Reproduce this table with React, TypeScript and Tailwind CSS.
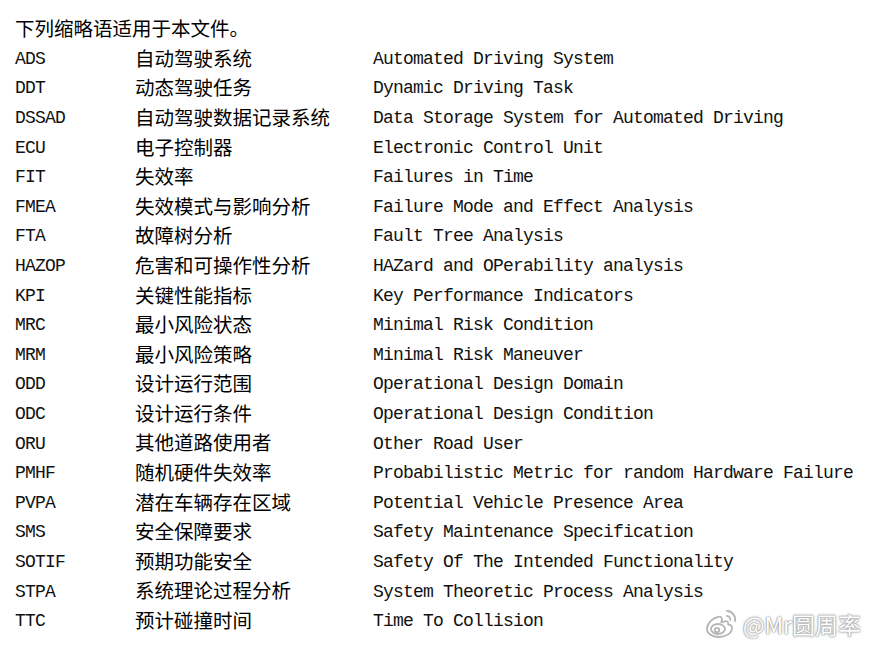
const rows: [string, string, string][] = [
  ["ADS", "自动驾驶系统", "Automated Driving System"],
  ["DDT", "动态驾驶任务", "Dynamic Driving Task"],
  ["DSSAD", "自动驾驶数据记录系统", "Data Storage System for Automated Driving"],
  ["ECU", "电子控制器", "Electronic Control Unit"],
  ["FIT", "失效率", "Failures in Time"],
  ["FMEA", "失效模式与影响分析", "Failure Mode and Effect Analysis"],
  ["FTA", "故障树分析", "Fault Tree Analysis"],
  ["HAZOP", "危害和可操作性分析", "HAZard and OPerability analysis"],
  ["KPI", "关键性能指标", "Key Performance Indicators"],
  ["MRC", "最小风险状态", "Minimal Risk Condition"],
  ["MRM", "最小风险策略", "Minimal Risk Maneuver"],
  ["ODD", "设计运行范围", "Operational Design Domain"],
  ["ODC", "设计运行条件", "Operational Design Condition"],
  ["ORU", "其他道路使用者", "Other Road User"],
  ["PMHF", "随机硬件失效率", "Probabilistic Metric for random Hardware Failure"],
  ["PVPA", "潜在车辆存在区域", "Potential Vehicle Presence Area"],
  ["SMS", "安全保障要求", "Safety Maintenance Specification"],
  ["SOTIF", "预期功能安全", "Safety Of The Intended Functionality"],
  ["STPA", "系统理论过程分析", "System Theoretic Process Analysis"],
  ["TTC", "预计碰撞时间", "Time To Collision"],
];

// latin glyphs are half width (10px), like the CJK font's own latin set
const mono = "font-['Liberation_Mono',monospace] text-[18px] tracking-[-0.8px] relative top-[2px] text-[#111]";
const cjk = "font-['Noto_Sans_CJK_SC',sans-serif] text-[19.5px]";

function WeiboMark() {
  return (
    <div className="absolute right-[9px] bottom-[5px] flex items-center gap-[3px]">
      <svg width="36" height="32" viewBox="0 0 36 32" fill="none" stroke="#b5b5b5" strokeWidth="1.8">
        <path d="M14 9c-5 1-11 6-11 12 0 5 6 8 12 8 7 0 13-4 13-9 0-3-3-4-4-3 1-3-1-5-5-3-2 1-2 0-1-2 0-3-2-4-4-3z" fill="white" />
        <ellipse cx="14" cy="21" rx="7" ry="5" fill="white" />
        <circle cx="13" cy="22" r="2.2" />
        <path d="M23 3c5 0 9 5 8 10" strokeLinecap="round" />
        <path d="M23 8c2 0 4 2 3 4" strokeLinecap="round" />
      </svg>
      <span className="font-['Noto_Sans_CJK_SC',sans-serif] text-[23px] leading-none text-white [text-shadow:0_0_1px_#8a8a8a,0_0_2px_#9a9a9a,0_0_3px_#bbb]">
        @Mr圆周率
      </span>
    </div>
  );
}

export default function App() {
  return (
    <div className="relative w-[870px] h-[645px] bg-white text-black pt-[13px] pl-[15px]">
      <div className={`${cjk} h-[29.6px] flex items-center`}>下列缩略语适用于本文件。</div>
      <div className="grid grid-cols-[120px_238px_1fr] auto-rows-[29.6px] items-center">
        {rows.map(([abbr, zh, en]) => (
          <div key={abbr} className="contents">
            <span className={mono}>{abbr}</span>
            <span className={cjk}>{zh}</span>
            <span className={`${mono} whitespace-nowrap`}>{en}</span>
          </div>
        ))}
      </div>
      <WeiboMark />
    </div>
  );
}
